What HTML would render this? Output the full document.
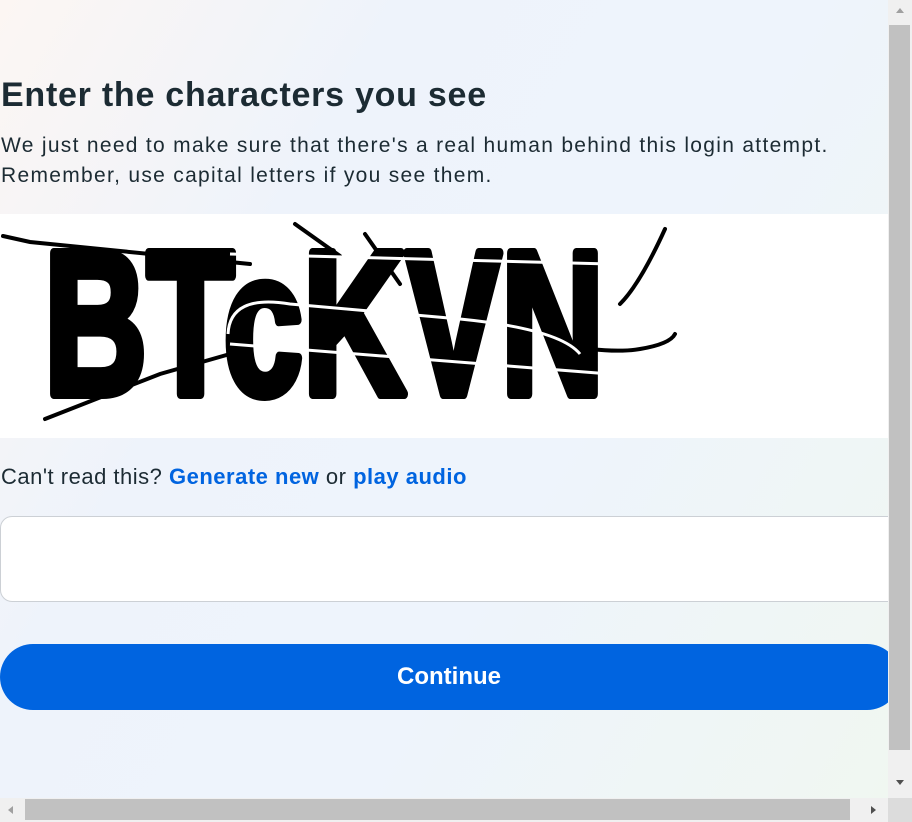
<!DOCTYPE html>
<html><head><style>
html,body{margin:0;padding:0;width:912px;height:822px;overflow:hidden;font-family:"Liberation Sans",sans-serif;color:#1c2b33}
.page{position:absolute;left:0;top:0;width:888px;height:798px;background:linear-gradient(120deg,#fcf6f3 0%,#eef3fb 30%,#eef4fc 60%,#f0f7f1 100%);overflow:hidden}
h1{position:absolute;left:1px;top:76px;margin:0;font-size:34px;font-weight:bold;letter-spacing:0.75px}
.p{position:absolute;left:1px;top:131px;font-size:21px;line-height:30px;letter-spacing:1.3px;white-space:nowrap}
.cap{position:absolute;left:0;top:214px;width:888px;height:224px;background:#fff}
.links{position:absolute;left:1px;top:464px;font-size:22px;letter-spacing:0.5px}
.links b{color:#0064e0}
.inp{position:absolute;left:0;top:516px;width:900px;height:84px;border:1px solid #ccd0d5;border-radius:12px;background:#fff}
.btn{position:absolute;left:0;top:644px;width:900px;height:66px;border-radius:33px;background:#0064e0;color:#fff;font-weight:bold;font-size:24px;line-height:66px}
.btn span{position:absolute;left:397px}
.vs{position:absolute;left:888px;top:0;width:24px;height:798px;background:#f0f0f0}
.vt{position:absolute;left:889px;top:25px;width:21px;height:725px;background:#c1c1c1}
.hs{position:absolute;left:0;top:798px;width:888px;height:24px;background:#f0f0f0}
.ht{position:absolute;left:25px;top:799px;width:825px;height:21px;background:#c1c1c1}
.corner{position:absolute;left:888px;top:798px;width:24px;height:24px;background:#dcdcdc}
</style></head><body>
<div class="page">
<h1>Enter the characters you see</h1>
<div class="p">We just need to make sure that there's a real human behind this login attempt.<br>Remember, use capital letters if you see them.</div>
<div class="cap">
<svg width="700" height="224" viewBox="0 0 700 224">
<g font-family="Liberation Sans" font-weight="bold" fill="#000" stroke="#000" stroke-width="10" stroke-linejoin="round">
<text x="44" y="180" font-size="205" textLength="560" lengthAdjust="spacingAndGlyphs">BTcKVN</text>
</g>
<g fill="none" stroke="#000" stroke-width="4" stroke-linecap="round">
<path d="M3 22 L30 28 L250 50"/>
<path d="M45 205 L160 160 L230 140"/>
<path d="M295 10 L340 42"/>
<path d="M365 20 L400 70"/>
<path d="M665 15 Q640 70 620 90"/>
<path d="M560 130 Q610 140 640 135 Q670 130 675 120"/>
</g>
<g fill="none" stroke="#fff" stroke-width="3">
<path d="M228 120 Q230 80 290 90 L460 105 Q560 115 580 140"/>
<path d="M230 130 L610 160"/>
<path d="M400 90 Q380 130 400 150"/>
<path d="M230 40 L610 50"/>
</g>
</svg>
</div>
<div class="links">Can't read this? <b>Generate new</b> or <b>play audio</b></div>
<div class="inp"></div>
<div class="btn"><span>Continue</span></div>
</div>
<div class="vs"></div><div class="vt"></div>
<svg style="position:absolute;left:893px;top:6px" width="14" height="8"><path d="M3 7 L7 2 L11 7Z" fill="#a0a0a0"/></svg>
<svg style="position:absolute;left:893px;top:779px" width="14" height="8"><path d="M3 1 L7 6 L11 1Z" fill="#505050"/></svg>
<div class="hs"></div><div class="ht"></div>
<svg style="position:absolute;left:6px;top:803px" width="8" height="14"><path d="M7 3 L2 7 L7 11Z" fill="#a0a0a0"/></svg>
<svg style="position:absolute;left:870px;top:803px" width="8" height="14"><path d="M1 3 L6 7 L1 11Z" fill="#505050"/></svg>
<div class="corner"></div>
</body></html>
